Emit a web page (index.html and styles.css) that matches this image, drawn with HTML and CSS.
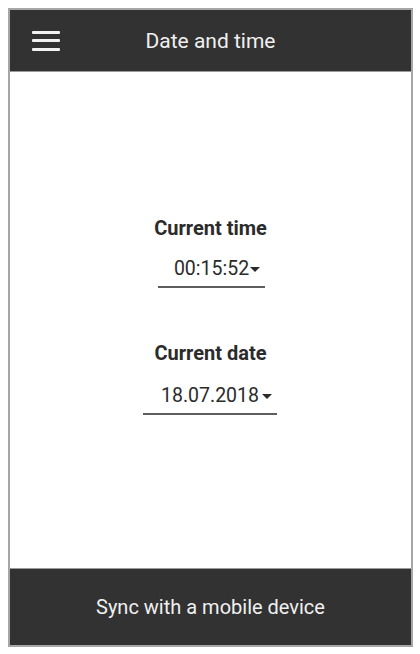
FILE: index.html
```html
<!DOCTYPE html>
<html lang="en">
<head>
<meta charset="utf-8">
<title>Date and time</title>
<link rel="stylesheet" href="styles.css">
</head>
<body>
<div class="frame">
  <header class="topbar">
    <div class="menu-cell">
      <span class="menu" aria-label="Menu"><i></i><i></i><i></i></span>
    </div>
    <h1 class="title">Date and time</h1>
    <div></div>
  </header>
  <main class="content">
    <section class="field">
      <div class="label">Current time</div>
      <div class="spinner spinner-time"><span class="value">00:15:52</span><span class="caret"></span></div>
    </section>
    <section class="field">
      <div class="label">Current date</div>
      <div class="spinner spinner-date"><span class="value">18.07.2018</span><span class="caret"></span></div>
    </section>
  </main>
  <footer class="bottombar">Sync with a mobile device</footer>
</div>
</body>
</html>
```
FILE: styles.css
```css
* { box-sizing: border-box; }
html, body { margin: 0; padding: 0; background: #fff; }
body { font-family: Roboto, "Liberation Sans", sans-serif; }

.frame {
  margin: 8px;
  width: 405px;
  height: 639px;
  border: 2px solid #a6a6a6;
  display: flex;
  flex-direction: column;
}

.topbar {
  height: 62px;
  flex: none;
  background: #323232;
  border-bottom: 1px solid #9a9a9a;
  display: grid;
  grid-template-columns: 1fr auto 1fr;
  align-items: center;
}
.menu-cell { padding-left: 22px; display: flex; align-items: center; }
.menu { display: flex; flex-direction: column; gap: 5.5px; width: 28px; }
.menu i { display: block; height: 3px; background: #f2f2f2; border-radius: 1px; }
.title {
  margin: 0;
  font-size: 21px;
  font-weight: 400;
  color: #f0f0f0;
  line-height: 24px;
}

.content {
  flex: 1;
  display: flex;
  flex-direction: column;
  align-items: center;
  justify-content: center;
  gap: 54px;
  padding-bottom: 8px;
  color: #2b2b2b;
}
.field { display: flex; flex-direction: column; align-items: center; gap: 18px; }
.field + .field { gap: 20px; }
.label { font-size: 20px; font-weight: 700; line-height: 22px; }

.spinner {
  position: relative;
  font-size: 19.5px;
  line-height: 24px;
  text-align: center;
  padding-bottom: 5px;
  border-bottom: 2px solid #5e5e5e;
}
.spinner-time { width: 107px; margin-left: 2px; }
.spinner-date { width: 134px; margin-left: -1px; }
.caret {
  position: absolute;
  right: 5px;
  top: 10px;
  width: 0;
  height: 0;
  border-left: 5px solid transparent;
  border-right: 5px solid transparent;
  border-top: 5px solid #2b2b2b;
}

.bottombar {
  height: 77px;
  flex: none;
  background: #323232;
  border-top: 1px solid #9a9a9a;
  color: #f0f0f0;
  font-size: 20px;
  display: flex;
  align-items: center;
  justify-content: center;
}
```
